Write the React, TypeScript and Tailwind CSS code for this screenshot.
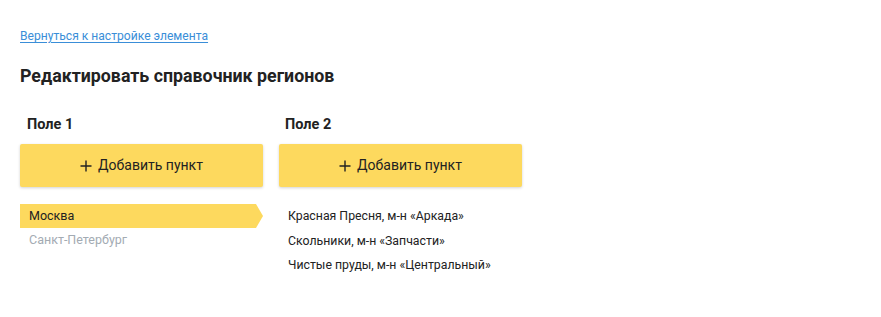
const FIELD_1 = [
  { id: 1, label: "Москва", active: true },
  { id: 2, label: "Санкт-Петербург", active: false },
];

const FIELD_2 = [
  { id: 1, label: "Красная Пресня, м-н «Аркада»" },
  { id: 2, label: "Скольники, м-н «Запчасти»" },
  { id: 3, label: "Чистые пруды, м-н «Центральный»" },
];

const AddButton = () => (
  <button className="w-full h-[43px] flex items-center justify-center gap-[6px] bg-[#fdd95e] rounded-[2px] shadow-[0_1px_3px_rgba(0,0,0,0.18)] text-[14px] text-[#222]">
    <svg width="12" height="12" viewBox="0 0 12 12" className="mt-[1px]">
      <path d="M6 0.5v11M0.5 6h11" stroke="#222" strokeWidth="1.4" />
    </svg>
    Добавить пункт
  </button>
);

const App = () => {
  return (
    <div className="min-h-[317px] bg-white px-5 pt-[23px] font-['Roboto',sans-serif]">
      {/* Back link */}
      <a
        href="#"
        className="text-[12.1px] text-[#3a8ed8] underline underline-offset-2"
      >
        Вернуться к настройке элемента
      </a>

      <h1 className="mt-[17px] text-[17.8px] font-bold text-[#222] leading-[24px]">
        Редактировать справочник регионов
      </h1>

      <div className="mt-[27px] flex gap-4">
        {/* Field 1 */}
        <div className="w-[243px]">
          <h3 className="px-[7px] text-[14.5px] font-bold text-[#222] leading-[20px]">
            Поле 1
          </h3>
          <div className="mt-[9px]">
            <AddButton />
          </div>
          <ul className="mt-[17px]">
            {FIELD_1.map((item) =>
              item.active ? (
                <li key={item.id} className="flex h-[24px]">
                  <div className="flex-1 bg-[#fdd95e] flex items-center pl-[9px] text-[12.5px] text-[#222]">
                    {item.label}
                  </div>
                  <svg width="8" height="24" viewBox="0 0 8 24">
                    <path d="M0 0h1l7 12-7 12H0z" fill="#fdd95e" />
                  </svg>
                </li>
              ) : (
                <li
                  key={item.id}
                  className="h-[25px] flex items-center pl-[9px] text-[12.5px] text-[#a3abb3]"
                >
                  {item.label}
                </li>
              )
            )}
          </ul>
        </div>

        {/* Field 2 */}
        <div className="w-[243px]">
          <h3 className="px-[6px] text-[14.5px] font-bold text-[#222] leading-[20px]">
            Поле 2
          </h3>
          <div className="mt-[9px]">
            <AddButton />
          </div>
          <ul className="mt-[17px]">
            {FIELD_2.map((item) => (
              <li
                key={item.id}
                className="h-[24.5px] flex items-center pl-[9px] text-[12.3px] text-[#222]"
              >
                {item.label}
              </li>
            ))}
          </ul>
        </div>
      </div>
    </div>
  );
};

export default App;
